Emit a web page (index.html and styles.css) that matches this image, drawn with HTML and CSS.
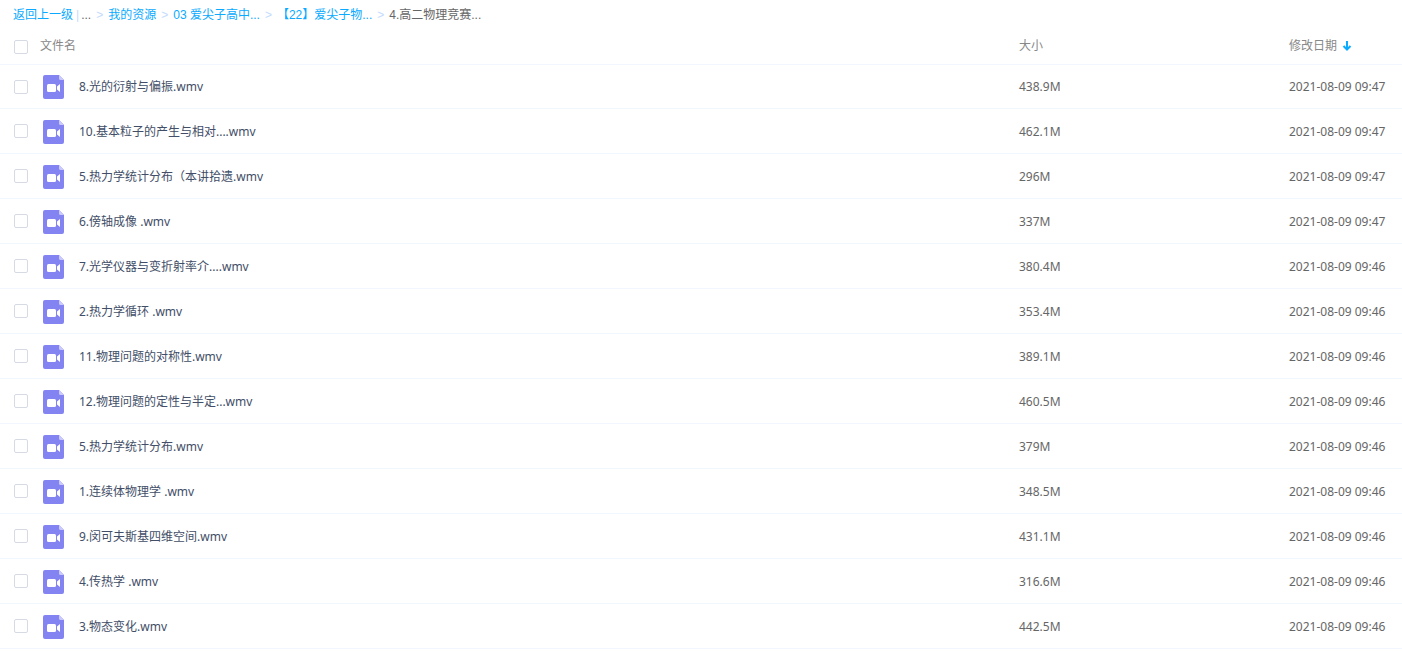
FILE: index.html
```html
<!DOCTYPE html>
<html lang="zh-CN">
<head>
<meta charset="utf-8">
<title>我的资源</title>
<link rel="stylesheet" href="styles.css">
</head>
<body>
<svg class="symbols" aria-hidden="true">
  <symbol id="video" viewBox="0 0 21 24">
    <path fill="#8383f1" d="M2 0H16L21 5V22a2 2 0 0 1-2 2H2a2 2 0 0 1-2-2V2a2 2 0 0 1 2-2z"/>
    <path fill="#cacafb" d="M16 0L21 5H17.5A1.5 1.5 0 0 1 16 3.5z"/>
    <rect x="4" y="9" width="9" height="8" rx="1.5" fill="#fff"/>
    <path fill="#fff" d="M17 9V17L14 14.500V11.500z"/>
  </symbol>
</svg>
<nav class="crumbs" aria-label="路径">
  <a href="#">返回上一级</a><span class="bar">|</span><span class="dots">...</span><span class="sep">&gt;</span><a href="#">我的资源</a><span class="sep">&gt;</span><a href="#">03 爱尖子高中...</a><span class="sep">&gt;</span><a href="#">【22】爱尖子物...</a><span class="sep">&gt;</span><span class="current">4.高二物理竞赛...</span>
</nav>
<table class="files">
  <thead>
    <tr>
      <th class="check"><input type="checkbox" aria-label="全选"></th>
      <th class="name-head" colspan="2">文件名</th>
      <th class="size">大小</th>
      <th class="date"><button class="sort" type="button">修改日期<svg class="arrow" viewBox="0 0 10 10" aria-hidden="true"><path d="M5 0V8M1.500 5L5 8.500L8.500 5" fill="none" stroke="#09aaff" stroke-width="2"/></svg></button></th>
    </tr>
  </thead>
  <tbody id="rows"></tbody>
</table>
<script src="files.js"></script>
</body>
</html>
```
FILE: styles.css
```css
body {
  margin: 0;
  background: #fff;
  font: 12px/18px "Noto Sans", "Noto Sans CJK SC", sans-serif;
  color: #424e67;
}
.symbols { display: none; }
.crumbs {
  display: flex;
  height: 30px;
  padding-left: 13px;
  align-items: center;
  font-family: "Liberation Sans", "Noto Sans CJK SC", sans-serif;
  white-space: pre;
  color: #666;
}
.crumbs a { color: #09aaff; text-decoration: none; }
.bar { margin: 0 2px 0 3px; color: #c4dbfe; }
.sep { margin: 0 5px; color: #c4dbfe; }
.files {
  width: 100%;
  border-spacing: 0;
  table-layout: fixed;
}
.files th, .files td {
  box-sizing: border-box;
  padding: 0;
  text-align: left;
  font-weight: 400;
}
.files th { height: 34px; color: #888; }
.files th:not(.check) { padding-bottom: 2px; }
.files td { height: 45px; border-bottom: 1px solid #f2f6fd; }
.files tbody tr:first-child td { border-top: 1px solid #f2f6fd; }
.files tbody tr:not(:first-child) td:not(.check) { padding-top: 2px; }
.files .check { width: 40px; padding-left: 14px; }
.files .icon { padding-left: 3px; }
.files .name { display: flex; align-items: center; gap: 15px; }
.files .size { width: 270px; }
.files .date { width: 113px; }
.files td.size, .files td.date { color: #666; }
.video { display: block; width: 21px; height: 24px; }
input[type="checkbox"] {
  appearance: none;
  display: block;
  box-sizing: border-box;
  width: 14px;
  height: 14px;
  margin: 0;
  border: 1px solid #d5dae3;
  border-radius: 2px;
  background: #fff;
}
input[type="checkbox"]:checked { background: #09aaff; }
.sort {
  display: flex;
  align-items: center;
  gap: 5px;
  padding: 0;
  border: 0;
  background: none;
  font: inherit;
  color: inherit;
}
.arrow { width: 10px; height: 10px; }
```
FILE: files.js
```js
const files = [
  ["8.光的衍射与偏振.wmv", "438.9M", "2021-08-09 09:47"],
  ["10.基本粒子的产生与相对....wmv", "462.1M", "2021-08-09 09:47"],
  ["5.热力学统计分布（本讲拾遗.wmv", "296M", "2021-08-09 09:47"],
  ["6.傍轴成像 .wmv", "337M", "2021-08-09 09:47"],
  ["7.光学仪器与变折射率介....wmv", "380.4M", "2021-08-09 09:46"],
  ["2.热力学循环 .wmv", "353.4M", "2021-08-09 09:46"],
  ["11.物理问题的对称性.wmv", "389.1M", "2021-08-09 09:46"],
  ["12.物理问题的定性与半定...wmv", "460.5M", "2021-08-09 09:46"],
  ["5.热力学统计分布.wmv", "379M", "2021-08-09 09:46"],
  ["1.连续体物理学 .wmv", "348.5M", "2021-08-09 09:46"],
  ["9.闵可夫斯基四维空间.wmv", "431.1M", "2021-08-09 09:46"],
  ["4.传热学 .wmv", "316.6M", "2021-08-09 09:46"],
  ["3.物态变化.wmv", "442.5M", "2021-08-09 09:46"]
];
document.getElementById("rows").innerHTML = files.map(([name, size, date], i) => `
  <tr>
    <td class="check"><input type="checkbox" id="file-${i}"></td>
    <td class="icon" colspan="2"><label class="name" for="file-${i}"><svg class="video" aria-hidden="true"><use href="#video"/></svg>${name}</label></td>
    <td class="size">${size}</td>
    <td class="date">${date}</td>
  </tr>`).join("");
```
